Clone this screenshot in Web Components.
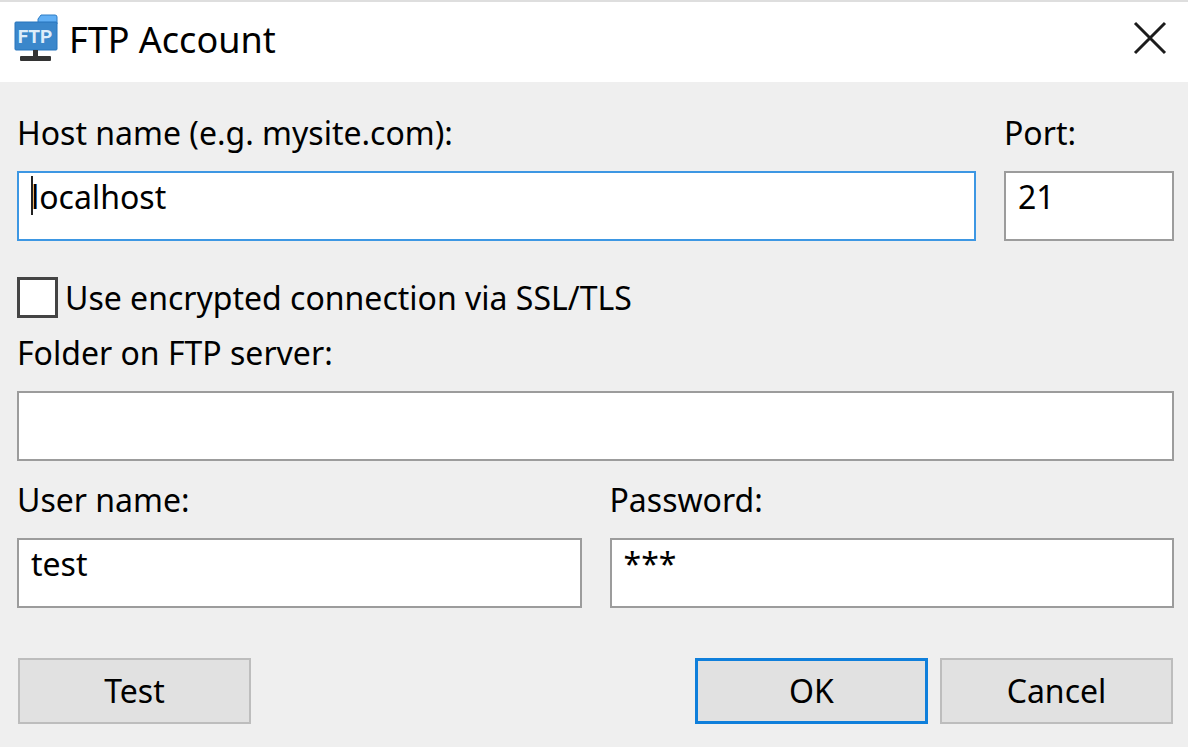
<!DOCTYPE html>
<html lang="en">
<head>
<meta charset="utf-8">
<title>FTP Account</title>
<style>
  html, body { margin: 0; min-height: 100%; background: #efefef; }
  body { font-family: "Noto Sans", "Open Sans", sans-serif; font-size: 32px; line-height: 40px; color: #000; }
</style>
</head>
<body>
<ftp-dialog></ftp-dialog>

<template id="dialog-tpl">
  <style>
    :host { display: block; }
    form { display: grid; grid-template-columns: minmax(0, 1fr) minmax(0, 1fr); column-gap: 28px; padding: 31px 14px 24px 17px; margin: 0; }
    .wide { grid-column: 1 / -1; }
    .host { display: flex; gap: 28px; }
    .host ui-field:first-child { flex: 1; min-width: 0; }
    .host ui-field:last-child { width: 170px; }
    ui-check { margin: 36px 0 15px; }
    .login { margin-top: 19px; }
    footer { display: flex; gap: 12px; margin: 50px 1px 0; }
    ui-button:first-child { margin-right: auto; }
  </style>
  <title-bar>FTP Account</title-bar>
  <form>
    <div class="wide host">
      <ui-field label="Host name (e.g. mysite.com):" value="localhost" active></ui-field>
      <ui-field label="Port:" value="21"></ui-field>
    </div>
    <ui-check class="wide">Use encrypted connection via SSL/TLS</ui-check>
    <ui-field class="wide" label="Folder on FTP server:" value=""></ui-field>
    <ui-field class="login" label="User name:" value="test"></ui-field>
    <ui-field class="login" label="Password:" value="***"></ui-field>
    <footer class="wide">
      <ui-button>Test</ui-button>
      <ui-button primary>OK</ui-button>
      <ui-button>Cancel</ui-button>
    </footer>
  </form>
</template>

<template id="title-tpl">
  <style>
    :host { display: block; }
    header { display: flex; align-items: center; gap: 11px; height: 72px; padding: 0 20px 8px 14px; background: #fff; border-top: 2px solid #dedede; }
    h1 { flex: 1; margin: 4px 0 0; font-size: 36px; line-height: 48px; font-weight: 400; }
    svg { display: block; }
    button { padding: 0; border: 0; background: none; }
  </style>
  <header>
    <svg width="44" height="48" viewBox="0 0 44 48" aria-hidden="true">
      <path d="M24 9V5l3-4h14q2 0 2 2v7H24z" fill="#62b0f5" stroke="#2e7cc4"/>
      <rect x="1" y="8" width="42" height="28" rx="1" fill="#3b87cb" stroke="#2675bd"/>
      <path d="M25 7V5.500l2.500-3.500H42v5z" fill="#62b0f5"/>
      <rect x="19" y="36" width="5" height="7" fill="#333"/>
      <rect x="6" y="42" width="31" height="5" rx="1" fill="#333"/>
      <text x="21" y="29" text-anchor="middle" font-family="Roboto, sans-serif" font-weight="700" font-size="19" fill="#deedfa">FTP</text>
    </svg>
    <h1><slot></slot></h1>
    <button type="button" aria-label="Close">
      <svg width="36" height="36" viewBox="0 0 36 36"><path d="M3 3L33 33M33 3L3 33" stroke="#1c1c1c" stroke-width="3" fill="none"/></svg>
    </button>
  </header>
</template>

<template id="field-tpl">
  <style>
    :host { display: block; }
    label { display: block; margin-bottom: 18px; }
    .box { position: relative; }
    input { display: block; box-sizing: border-box; width: 100%; height: 70px; margin: 0; padding: 3px 12px 23px; border: 2px solid #9c9c9c; border-radius: 0; outline: 0; background: #fff; font: inherit; color: inherit; }
    :host([active]) input { border-color: #3d97e3; caret-color: transparent; }
    :host([active]) .box::after { content: ""; position: absolute; left: 14px; top: 5px; width: 2px; height: 39px; background: #222; }
  </style>
  <label for="in"></label>
  <div class="box"><input id="in" type="text" autocomplete="off"></div>
</template>

<template id="check-tpl">
  <style>
    :host { display: block; }
    label { display: flex; align-items: center; gap: 7px; height: 41px; }
    input { appearance: none; box-sizing: border-box; width: 41px; height: 41px; margin: 0; border: 3px solid #444; background: #fff; }
  </style>
  <label><input type="checkbox"><span><slot></slot></span></label>
</template>

<template id="button-tpl">
  <style>
    :host { display: block; }
    button { box-sizing: border-box; width: 233px; height: 66px; margin: 0; padding: 0; border: 2px solid #bdbdbd; border-radius: 0; background: #e1e1e1; font: inherit; color: inherit; }
    :host([primary]) button { border: 3px solid #0f7fdb; }
  </style>
  <button type="button"><slot></slot></button>
</template>

<script>
  class Base extends HTMLElement {
    constructor() {
      super();
      const tpl = document.getElementById(this.constructor.tpl);
      this.attachShadow({ mode: "open" }).appendChild(tpl.content.cloneNode(true));
    }
  }
  class TitleBar extends Base { static tpl = "title-tpl"; }
  class UiCheck extends Base { static tpl = "check-tpl"; }
  class UiButton extends Base { static tpl = "button-tpl"; }
  class UiField extends Base {
    static tpl = "field-tpl";
    connectedCallback() {
      this.shadowRoot.querySelector("label").textContent = this.getAttribute("label");
      this.shadowRoot.querySelector("input").value = this.getAttribute("value");
    }
  }
  class FtpDialog extends Base { static tpl = "dialog-tpl"; }
  customElements.define("title-bar", TitleBar);
  customElements.define("ui-check", UiCheck);
  customElements.define("ui-button", UiButton);
  customElements.define("ui-field", UiField);
  customElements.define("ftp-dialog", FtpDialog);
</script>
</body>
</html>
